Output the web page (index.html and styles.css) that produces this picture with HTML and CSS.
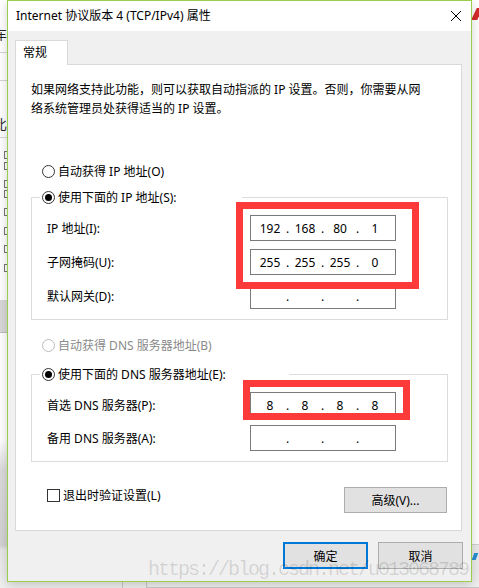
FILE: index.html
```html
<!DOCTYPE html>
<html lang="zh-CN">
<head>
<meta charset="utf-8">
<title>Internet 协议版本 4 (TCP/IPv4) 属性</title>
<link rel="stylesheet" href="styles.css">
</head>
<body>
<div class="backwin backwin-left">
  <span class="bg-glyph g1">车</span>
  <span class="bg-line l1"></span>
  <span class="bg-line l2"></span>
  <span class="bg-glyph g2">比</span>
  <span class="bg-line l3"></span>
  <span class="bg-box b1"></span>
  <span class="bg-box b2"></span>
  <span class="bg-box b3"></span>
  <span class="bg-box b4"></span>
  <span class="bg-box b5"></span>
  <span class="bg-box b6"></span>
  <span class="bg-box b7"></span>
  <span class="bg-box b8"></span>
  <span class="bg-block"></span>
</div>
<div class="backwin backwin-right">
  <span class="red-icon"></span>
  <span class="bg-line r1"></span>
  <span class="blue-icon"></span>
</div>
<div class="backwin-bottom">
  <span class="vline v1"></span>
  <span class="vline v2"></span>
</div>

<div class="desktop">
  <div class="dialog">
    <div class="titlebar">
      <span class="title">Internet 协议版本 4 (TCP/IPv4) 属性</span>
      <svg class="close" width="10" height="10" viewBox="0 0 10 10" aria-hidden="true">
        <path d="M0 0L10 10M10 0L0 10" stroke="#000" stroke-width="1" fill="none"/>
      </svg>
    </div>
    <div class="body">
      <div class="tabs"><div class="tab">常规</div></div>
      <div class="panel">
        <p class="desc">如果网络支持此功能，则可以获取自动指派的 IP 设置。否则，你需要从网<br>络系统管理员处获得适当的 IP 设置。</p>

        <div class="radio radio-first"><span class="dot"></span>自动获得 IP 地址(O)</div>

        <fieldset class="group group-ip">
          <legend class="legend legend-ip"><span class="dot on"></span>使用下面的 IP 地址(S):</legend>
          <div class="rows rows-ip">
            <div class="row">
              <span class="lbl">IP 地址(I):</span>
              <div class="ip"><span class="seg">192</span><span class="sep">.</span><span class="seg">168</span><span class="sep">.</span><span class="seg">80</span><span class="sep">.</span><span class="seg">1</span></div>
            </div>
            <div class="row">
              <span class="lbl">子网掩码(U):</span>
              <div class="ip"><span class="seg">255</span><span class="sep">.</span><span class="seg">255</span><span class="sep">.</span><span class="seg">255</span><span class="sep">.</span><span class="seg">0</span></div>
            </div>
            <div class="row">
              <span class="lbl">默认网关(D):</span>
              <div class="ip"><span class="seg"></span><span class="sep">.</span><span class="seg"></span><span class="sep">.</span><span class="seg"></span><span class="sep">.</span><span class="seg"></span></div>
            </div>
          </div>
        </fieldset>

        <div class="radio radio-dns disabled"><span class="dot"></span>自动获得 DNS 服务器地址(B)</div>

        <fieldset class="group group-dns">
          <legend class="legend legend-dns"><span class="dot on"></span>使用下面的 DNS 服务器地址(E):</legend>
          <div class="rows rows-dns">
            <div class="row">
              <span class="lbl">首选 DNS 服务器(P):</span>
              <div class="ip"><span class="seg">8</span><span class="sep">.</span><span class="seg">8</span><span class="sep">.</span><span class="seg">8</span><span class="sep">.</span><span class="seg">8</span></div>
            </div>
            <div class="row">
              <span class="lbl">备用 DNS 服务器(A):</span>
              <div class="ip"><span class="seg"></span><span class="sep">.</span><span class="seg"></span><span class="sep">.</span><span class="seg"></span><span class="sep">.</span><span class="seg"></span></div>
            </div>
          </div>
        </fieldset>

        <div class="bottom">
          <div class="check"><span class="box"></span>退出时验证设置(L)</div>
          <button class="btn btn-adv" type="button">高级(V)...</button>
        </div>
      </div>
      <div class="actions">
        <button class="btn btn-ok" type="button">确定</button>
        <button class="btn" type="button">取消</button>
      </div>
    </div>
  </div>
</div>

<div class="mark mark-ip"></div>
<div class="mark mark-dns"></div>
<div class="watermark">https://blog.csdn.net/u013068789</div>
</body>
</html>
```

FILE: styles.css
```css
* { box-sizing: border-box; }

html, body { margin: 0; padding: 0; }

body {
  width: 479px;
  height: 588px;
  overflow: hidden;
  position: relative;
  background: #f2f2f2;
  font-family: "Noto Sans", "Noto Sans CJK SC", sans-serif;
  font-size: 12px;
  color: #000;
}

/* background windows peeking out around the dialog */
.backwin {
  position: absolute;
  top: 0;
  height: 588px;
  overflow: hidden;
  background: #fff;
}
.backwin-left { left: 0; width: 8px; background: linear-gradient(#fff 0, #fff 440px, #dcdcdc 470px, #d2d2d2 545px, #e8e8e8 550px, #efefef 588px); }
.backwin-right { left: 471px; width: 8px; background: linear-gradient(#fff 0, #fff 544px, #e9e9e9 545px, #eeeeee 588px); }

.backwin-bottom {
  position: absolute;
  left: 0;
  top: 582px;
  width: 479px;
  height: 6px;
  background: #efefef;
}
.vline { position: absolute; top: 0; width: 1px; height: 6px; background: #c8c8c8; }
.v1 { left: 122px; }
.v2 { left: 146px; border-bottom: 1px solid #c8c8c8; }
.v2::after { content: ""; position: absolute; left: 0; top: 5px; width: 333px; height: 1px; background: #c8c8c8; }

.bg-glyph { position: absolute; left: -6px; font-size: 13px; line-height: 14px; color: #222; }
.g1 { top: 27px; }
.g2 { top: 117px; }
.bg-line { position: absolute; left: 0; width: 8px; height: 1px; background: #d6d6d6; }
.l1 { top: 52px; }
.l2 { top: 80px; }
.l3 { top: 137px; }
.r1 { top: 544px; background: #cfcfcf; }
.bg-box { position: absolute; left: 4px; width: 6px; height: 8px; border: 1px solid #777; }
.b1 { top: 151px; } .b2 { top: 162px; } .b3 { top: 180px; } .b4 { top: 190px; }
.b5 { top: 208px; } .b6 { top: 227px; } .b7 { top: 245px; } .b8 { top: 264px; }
.bg-block { position: absolute; left: 0; top: 300px; width: 8px; height: 33px; background: #d9d9d9; border-bottom: 1px solid #bdbdbd; }
.red-icon { position: absolute; left: 3px; top: 8px; width: 6px; height: 12px; background: #d42a2a; transform: skewX(-25deg); }
.blue-icon { position: absolute; left: 2px; top: 553px; width: 4px; height: 7px; background: #2a8fd0; transform: skewX(-20deg); }

/* dialog */
.desktop {
  display: flex;
  padding-left: 7px;
  position: relative;
  z-index: 1;
}

.dialog {
  width: 465px;
  height: 582px;
  border: 1px solid #9acd4a;
  background: #f0f0f0;
  display: flex;
  flex-direction: column;
  box-shadow: 0 3px 10px rgba(0, 0, 0, 0.18);
}

.titlebar {
  height: 30px;
  flex: none;
  background: #fff;
  display: flex;
  align-items: center;
  padding-left: 8px;
}
.title { line-height: 16px; }
.close { margin-left: auto; margin-right: 10px; }

.body {
  flex: 1;
  display: flex;
  flex-direction: column;
  padding: 9px 8px 12px 7px;
}

.tabs { display: flex; }
.tab {
  width: 53px;
  height: 25px;
  border: 1px solid #d9d9d9;
  border-bottom: none;
  background: #fff;
  padding-left: 7px;
  line-height: 23px;
  margin-bottom: -1px;
  position: relative;
  z-index: 1;
}

.panel {
  width: 447px;
  height: 467px;
  background: #fff;
  border: 1px solid #d9d9d9;
  padding: 15px 13px 17px 15px;
  display: flex;
  flex-direction: column;
}

.desc {
  margin: 0;
  line-height: 19px;
  white-space: nowrap;
}

.radio {
  display: flex;
  align-items: center;
  height: 20px;
  padding-left: 11px;
}
.radio-first { margin-top: 43px; }
.radio-dns { margin-top: 15px; }
.radio.disabled { color: #8a8a8a; }
.radio.disabled .dot { border-color: #bcbcbc; }

.dot {
  width: 13px;
  height: 13px;
  border: 1px solid #333;
  border-radius: 50%;
  background: #fff;
  margin-right: 3px;
  flex: none;
  display: flex;
  align-items: center;
  justify-content: center;
}
.dot.on::after {
  content: "";
  width: 7px;
  height: 7px;
  border-radius: 50%;
  background: #000;
}

.group {
  width: 417px;
  margin: 0;
  padding: 9px 0 10px 8px;
  border: 1px solid #dcdcdc;
  min-width: 0;
}
.group-ip { margin-top: 7px; }
.group-dns { margin-top: 10px; }

.legend {
  display: flex;
  align-items: center;
  height: 18px;
  padding: 0 0 0 2px;
  background: #fff;
}
.legend-ip { width: 202px; }
.legend-dns { width: 249px; }

.rows {
  display: flex;
  flex-direction: column;
  padding-left: 7px;
}
.rows-ip { gap: 8px; }
.rows-dns { gap: 7px; }

.row {
  display: flex;
  align-items: center;
  height: 26px;
}
.lbl { width: 203px; flex: none; }

.ip {
  width: 146px;
  height: 26px;
  border: 1px solid #7a7a7a;
  background: #fff;
  display: flex;
  align-items: center;
  padding-left: 5px;
}
.seg { width: 28px; text-align: center; }
.sep { width: 7px; text-align: center; }

.bottom {
  display: flex;
  justify-content: space-between;
  align-items: flex-start;
  width: 416px;
  margin-top: 25px;
  padding-left: 16px;
}
.check {
  display: flex;
  align-items: center;
  height: 14px;
  margin-top: 1px;
}
.box {
  width: 13px;
  height: 13px;
  border: 1px solid #333;
  background: #fff;
  margin-right: 3px;
}

.btn {
  font: inherit;
  color: #000;
  background: #e1e1e1;
  border: 1px solid #adadad;
  border-radius: 0;
  width: 85px;
  height: 27px;
  padding: 0;
}
.btn-adv { width: 103px; height: 26px; }
.btn-ok { border: 2px solid #0078d7; }

.actions {
  display: flex;
  justify-content: flex-end;
  gap: 10px;
  margin-top: 11px;
}

/* annotations drawn over the screenshot */
.mark {
  position: absolute;
  z-index: 2;
  border: 7px solid #fd3a3a;
}
.mark-ip { left: 236px; top: 202px; width: 183px; height: 87px; }
.mark-dns { left: 243px; top: 380px; width: 167px; height: 40px; }

.watermark {
  position: absolute;
  z-index: 3;
  left: 148px;
  top: 560px;
  font-family: "Liberation Mono", monospace;
  font-size: 20px;
  letter-spacing: -2px;
  line-height: 20px;
  color: rgba(0, 0, 0, 0.13);
  white-space: nowrap;
}
```
